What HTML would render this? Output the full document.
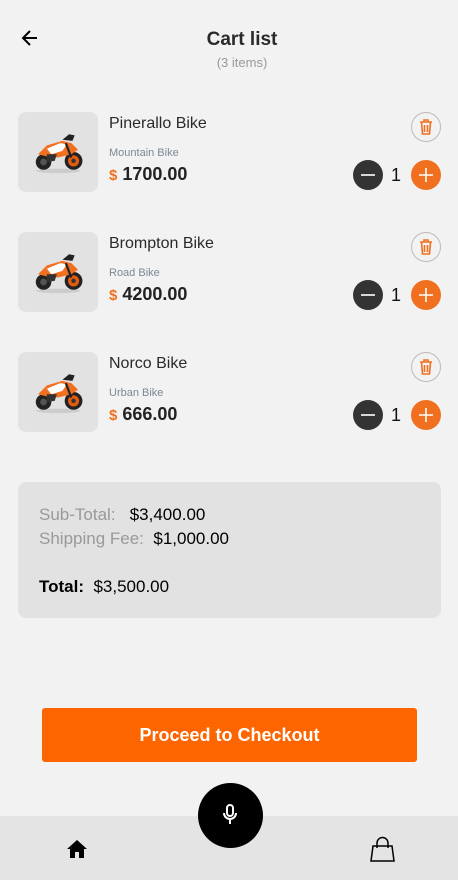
<!DOCTYPE html>
<html><head><meta charset="utf-8"><style>
*{margin:0;padding:0;box-sizing:border-box}
body{width:458px;height:880px;background:#f2f2f2;font-family:"Liberation Sans",sans-serif;position:relative;overflow:hidden;color:#222}
.abs{position:absolute}
.img{left:18px;width:80px;height:80px;background:#e2e2e2;border-radius:8px;overflow:hidden}
.t{left:109px;font-size:16px;color:#2a2a2a}
.s{left:109px;font-size:11px;color:#7b8896}
.p{left:109px;font-size:18px;font-weight:bold;color:#222}
.p span{color:#f07020;font-size:15px}
.tr{left:411px;width:30px;height:30px;border:1px solid #bbb;border-radius:50%}
.mn{left:353px;width:30px;height:30px;border-radius:50%;background:#333}
.pl{left:411px;width:30px;height:30px;border-radius:50%;background:#f07020}
.q{left:391px;font-size:18px;color:#111}
</style></head><body>
<svg class="abs" style="left:20px;top:28px" width="20" height="20" viewBox="0 0 20 20"><path d="M17 10H4M10 3L3 10l7 7" stroke="#000" stroke-width="2" fill="none"/></svg>
<div class="abs" style="left:0;width:484px;top:29px;text-align:center;font-size:19px;font-weight:bold;color:#2a2a2a">Cart list</div>
<div class="abs" style="left:0;width:484px;top:55px;text-align:center;font-size:13px;color:#999">(3 items)</div>

<div id="rows"></div>

<div class="abs" style="left:18px;top:482px;width:423px;height:136px;background:#e2e2e2;border-radius:8px"></div>
<div class="abs" style="left:39px;top:505px;font-size:17px;color:#999">Sub-Total:&nbsp;&nbsp; <span style="color:#000">$3,400.00</span></div>
<div class="abs" style="left:39px;top:529px;font-size:17px;color:#999">Shipping Fee:&nbsp; <span style="color:#000">$1,000.00</span></div>
<div class="abs" style="left:39px;top:577px;font-size:17px;color:#000"><b>Total:</b>&nbsp; $3,500.00</div>

<div class="abs" style="left:42px;top:708px;width:375px;height:54px;background:#fc6500;border-radius:3px;color:#fff;font-weight:bold;font-size:18px;text-align:center;line-height:54px">Proceed to Checkout</div>

<div class="abs" style="left:0;top:816px;width:458px;height:64px;background:#e4e4e4"></div>
<div class="abs" style="left:198px;top:783px;width:65px;height:65px;border-radius:50%;background:#000"></div>
<svg class="abs" style="left:220px;top:803px" width="20" height="24" viewBox="0 0 20 24"><rect x="7" y="2" width="6" height="11" rx="3" fill="none" stroke="#fff" stroke-width="2"/><path d="M4 10a6 6 0 0 0 12 0M10 16v5" stroke="#fff" stroke-width="2" fill="none"/></svg>
<svg class="abs" style="left:66px;top:838px" width="22" height="22" viewBox="0 0 22 22"><path d="M11 2L1 11h3v9h5v-6h4v6h5v-9h3z" fill="#000"/></svg>
<svg class="abs" style="left:370px;top:836px" width="25" height="27" viewBox="0 0 25 27"><path d="M3 10h19l2 15H1z" fill="none" stroke="#000" stroke-width="1.5"/><path d="M7 12V7a5.5 5.5 0 0 1 11 0v5" fill="none" stroke="#000" stroke-width="1.5"/></svg>

<script>
var d=[["Pinerallo Bike","Mountain Bike","1700.00"],["Brompton Bike","Road Bike","4200.00"],["Norco Bike","Urban Bike","666.00"]];
var h="";
var bike='<svg width="80" height="80" viewBox="4 4 72 72"><ellipse cx="40" cy="57" rx="20" ry="2" fill="#ccc"/><circle cx="27" cy="49" r="7" fill="#222"/><circle cx="54" cy="48" r="8" fill="#222"/><circle cx="54" cy="48" r="5" fill="#e65a10"/><circle cx="54" cy="48" r="2" fill="#333"/><circle cx="27" cy="49" r="3" fill="#555"/><path d="M22 42l8-8 14-4 8 2 6 6-6 4-12 3-10-1z" fill="#f07020"/><path d="M30 37l12-5 6 1-4 6-10 3z" fill="#fff"/><path d="M44 29l6-5 5 1-2 5z" fill="#222"/><path d="M30 42l9 0-2 6-7 1z" fill="#333"/><path d="M47 32l5 13" stroke="#222" stroke-width="2"/></svg>';
for(var i=0;i<3;i++){var y=112+i*120;
h+='<div class="abs img" style="top:'+y+'px">'+bike+'</div>';
h+='<div class="abs t" style="top:'+(y+3)+'px">'+d[i][0]+'</div>';
h+='<div class="abs s" style="top:'+(y+35)+'px">'+d[i][1]+'</div>';
h+='<div class="abs p" style="top:'+(y+52)+'px"><span>$</span> '+d[i][2]+'</div>';
h+='<div class="abs tr" style="top:'+y+'px"><svg width="28" height="28" viewBox="0 0 28 28"><path d="M8 9h12M12 9V7h4v2M9.5 9l1 12h7l1-12M12.5 12v7M15.5 12v7" stroke="#f07020" stroke-width="1.6" fill="none"/></svg></div>';
h+='<div class="abs mn" style="top:'+(y+48)+'px"><svg width="30" height="30"><path d="M8 15h14" stroke="#fff" stroke-width="1.6"/></svg></div>';
h+='<div class="abs q" style="top:'+(y+53)+'px">1</div>';
h+='<div class="abs pl" style="top:'+(y+48)+'px"><svg width="30" height="30"><path d="M8 15h14M15 8v14" stroke="#fff" stroke-width="1.6"/></svg></div>';}
document.getElementById("rows").innerHTML=h;
</script>
</body></html>
